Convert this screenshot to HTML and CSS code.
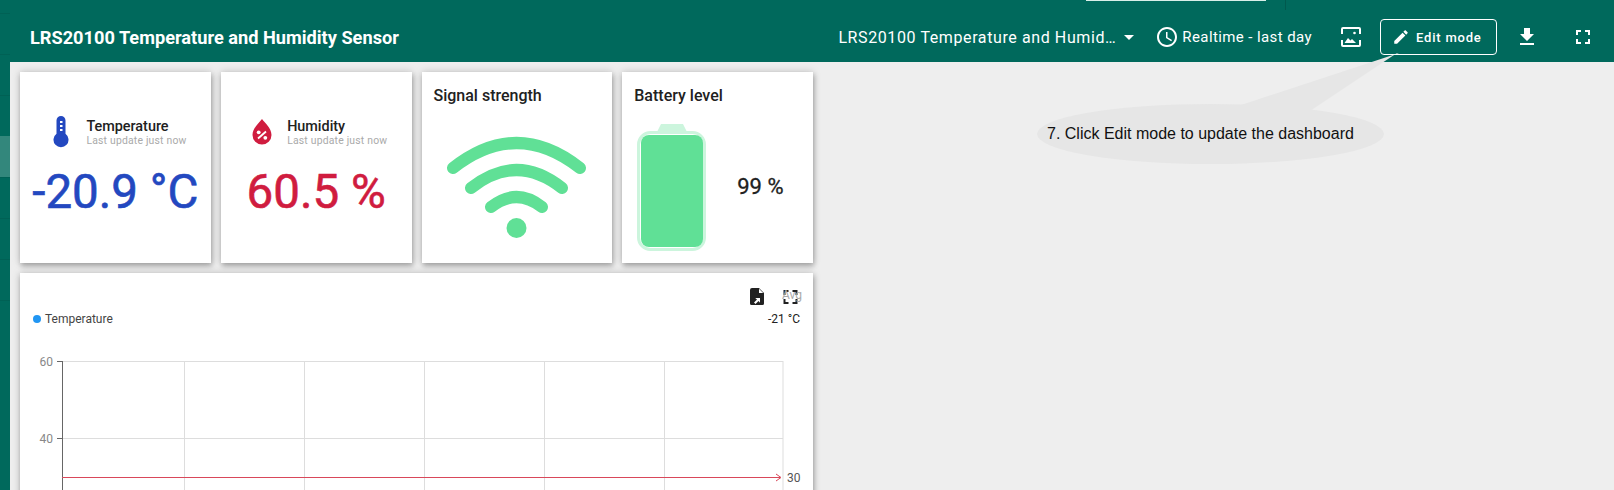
FILE: index.html
```html
<!DOCTYPE html>
<html lang="en">
<head>
    <meta charset="UTF-8">
    <title>LRS20100 Temperature and Humidity Sensor</title>
    <link rel="stylesheet" href="styles.css">
</head>
<body>
    <div class="app">
        <div class="sidebar">
            <div class="nav-item"></div>
            <div class="nav-item"></div>
            <div class="nav-item"></div>
            <div class="nav-item active"></div>
            <div class="nav-item"></div>
            <div class="nav-item"></div>
            <div class="nav-item"></div>
            <div class="nav-item"></div>
        </div>
        <div class="content">
            <div class="header">
                <div class="top-strip"></div>
                <div class="top-line"></div>
                <h1>LRS20100 Temperature and Humidity Sensor</h1>
                <div class="state-select">
                    <span class="state-name">LRS20100 Temperature and Humid…</span>
                    <span class="caret"></span>
                </div>
                <div class="timewindow">
                    <svg class="icon" viewBox="0 0 24 24"><path d="M11.99 2C6.47 2 2 6.48 2 12s4.47 10 9.99 10C17.52 22 22 17.52 22 12S17.52 2 11.99 2zM12 20c-4.42 0-8-3.58-8-8s3.58-8 8-8 8 3.58 8 8-3.58 8-8 8zm.5-13H11v6l5.25 3.15.75-1.23-4.5-2.67z"/></svg>
                    <span>Realtime - last day</span>
                </div>
                <svg class="capture" viewBox="0 0 20 20">
                    <path d="M0 7V2a2 2 0 0 1 2-2h16a2 2 0 0 1 2 2v5h-2V2H2v5zM0 13h2v5h16v-5h2v5a2 2 0 0 1-2 2H2a2 2 0 0 1-2-2z"/>
                    <circle cx="13.500" cy="6" r="1.300"/>
                    <path d="M3.500 16l3.500-5 2.500 2.500 1.500-1.500 4 4z"/>
                </svg>
                <div class="edit-btn">
                    <svg class="icon-small" viewBox="0 0 24 24"><path d="M3 17.250V21h3.750L17.810 9.940l-3.750-3.750L3 17.250zM20.710 7.040c.39-.39.39-1.020 0-1.410l-2.340-2.340c-.39-.39-1.020-.39-1.410 0l-1.830 1.830 3.750 3.750 1.830-1.830z"/></svg>
                    <span>Edit mode</span>
                </div>
                <svg class="icon download" viewBox="0 0 24 24"><path d="M19 9h-4V3H9v6H5l7 7 7-7zM5 18v2h14v-2H5z"/></svg>
                <svg class="icon fullscreen" viewBox="0 0 24 24"><path d="M7 14H5v5h5v-2H7v-3zm-2-4h2V7h3V5H5v5zm12 7h-3v2h5v-5h-2v3zM14 5v2h3v3h2V5h-5z"/></svg>
            </div>

            <div class="main">
                <div class="cards">
                    <div class="card reading">
                        <div class="reading-head">
                            <svg class="reading-icon" viewBox="0 0 20 32">
                                <path fill="#2348c0" d="M5.500 4.500a4.500 4.500 0 0 1 9 0v13.300a7.500 7.500 0 1 1-9 0z"/>
                                <path fill="#fff" d="M9 5h2.500v2H9zM9 9h2.500v2H9zM9 13h2.500v2H9z"/>
                            </svg>
                            <div>
                                <div class="reading-title">Temperature</div>
                                <div class="reading-sub">Last update just now</div>
                            </div>
                        </div>
                        <div class="reading-value temp">-20.9 °C</div>
                    </div>
                    <div class="card reading">
                        <div class="reading-head">
                            <svg class="reading-icon" viewBox="0 0 20 32">
                                <path fill="#d01c3f" d="M10 3c2.500 3.500 9.500 9 9.500 16a9.500 9.500 0 0 1-19 0C.5 12 7.500 6.500 10 3z"/>
                                <path stroke="#fff" stroke-width="1.800" d="M6 22.500L14 15.500"/>
                                <circle fill="#fff" cx="6.700" cy="16.300" r="1.900"/>
                                <circle fill="#fff" cx="13.300" cy="21.800" r="1.900"/>
                            </svg>
                            <div>
                                <div class="reading-title">Humidity</div>
                                <div class="reading-sub">Last update just now</div>
                            </div>
                        </div>
                        <div class="reading-value humid">60.5 %</div>
                    </div>
                    <div class="card gauge">
                        <div class="card-title">Signal strength</div>
                        <svg class="wifi" viewBox="0 0 151 105">
                            <path d="M12 33Q75.500 -17 139 33M30 53Q75.500 17 121 53M50 72Q75.500 52 101 72"/>
                            <circle cx="75.500" cy="93" r="10"/>
                        </svg>
                    </div>
                    <div class="card gauge">
                        <div class="card-title">Battery level</div>
                        <div class="battery-row">
                            <svg class="battery" viewBox="0 0 72 130">
                                <path fill="#ccf5dd" d="M21 9L25 1H47L51 9z"/>
                                <rect x="2.500" y="9.500" width="66" height="117" rx="12" fill="none" stroke="#ccf5dd" stroke-width="3"/>
                                <rect x="5" y="12" width="62" height="112" rx="8" fill="#60e096"/>
                            </svg>
                            <div class="battery-value">99 %</div>
                        </div>
                    </div>
                </div>

                <div class="card chart-card">
                    <div class="chart-tools">
                        <svg class="doc-icon" viewBox="0 0 14 17">
                            <path d="M2 0h7l5 5v10.500a1.500 1.500 0 0 1-1.500 1.500h-11A1.500 1.500 0 0 1 0 15.500V2a2 2 0 0 1 2-2z"/>
                            <path fill="#fff" d="M9 .8V5h4.200zM4 14.500l3-3-1.800-1.500H10v4.800l-1.500-1.800-3 3z"/>
                        </svg>
                        <div class="expand">
                            <svg class="expand-icon" viewBox="5 5 14 14"><path d="M7 14H5v5h5v-2H7v-3zm-2-4h2V7h3V5H5v5zm12 7h-3v2h5v-5h-2v3zM14 5v2h3v3h2V5h-5z"/></svg>
                            <span class="avg">Avg</span>
                        </div>
                    </div>
                    <div class="legend">
                        <span class="legend-dot"></span>
                        <span class="legend-name">Temperature</span>
                        <span class="legend-value">-21 °C</span>
                    </div>
                    <svg class="chart" viewBox="0 0 793 200">
                        <g class="grid">
                            <path d="M42.500 21.500H763M42.500 98.500H763"/>
                            <path d="M164.500 21V200M284.500 21V200M404.500 21V200M524.500 21V200M644.500 21V200M763 21V200"/>
                        </g>
                        <path class="axis" d="M37 21.500H42.500M37 98.500H42.500M42.500 21V200"/>
                        <text class="tick" x="33" y="25.500" text-anchor="end">60</text>
                        <text class="tick" x="33" y="102.500" text-anchor="end">40</text>
                        <path class="limit" d="M42 137.500H760M756 134l5 3.500-5 3.500"/>
                        <text class="tick limit-label" x="767" y="141.500">30</text>
                    </svg>
                </div>
            </div>
        </div>
    </div>

    <div class="callout">
        <svg class="callout-shape" viewBox="0 0 347 115">
            <ellipse cx="173.500" cy="84" rx="173.500" ry="30"/>
            <path d="M198 57L362 3H360L270 63z"/>
        </svg>
        <div class="callout-text">7. Click Edit mode to update the dashboard</div>
    </div>
</body>
</html>
```

FILE: styles.css
```css
html, body {
    height: 100%;
    margin: 0;
    overflow: hidden;
}
body {
    font-family: Roboto, "Liberation Sans", sans-serif;
    background-color: #eeeeee;
    color: #212121;
}
.app {
    display: flex;
    height: 490px;
    overflow: hidden;
}
.sidebar {
    flex: 0 0 10px;
    background-color: #00695c;
    padding-top: 13px;
    box-sizing: border-box;
}
.nav-item {
    height: 41px;
    box-sizing: border-box;
    border-top: 1px solid rgba(0, 0, 0, 0.07);
}
.nav-item.active {
    background-color: rgba(255, 255, 255, 0.2);
    border-top: none;
}
.content {
    flex: 1;
    min-width: 0;
}
.header {
    position: relative;
    display: flex;
    align-items: center;
    height: 62px;
    padding: 12px 0 0 20px;
    box-sizing: border-box;
    background-color: #00695c;
    color: white;
}
.top-strip {
    position: absolute;
    top: 0;
    left: 1076px;
    width: 180px;
    height: 1px;
    background-color: #d8efe9;
}
.top-line {
    position: absolute;
    top: 0;
    left: 1275px;
    width: 1px;
    height: 10px;
    background-color: rgba(0, 0, 0, 0.15);
}
h1 {
    margin: 0 auto 0 0;
    font-size: 18.200px;
    font-weight: 700;
}
.state-select {
    display: flex;
    align-items: center;
    font-size: 16px;
    letter-spacing: 0.6px;
}
.state-name {
    white-space: nowrap;
}
.caret {
    width: 0;
    height: 0;
    margin: 0 0 0 8px;
    border-left: 5px solid transparent;
    border-right: 5px solid transparent;
    border-top: 5px solid white;
}
.timewindow {
    display: flex;
    align-items: center;
    gap: 3px;
    margin-left: 21px;
    font-size: 15px;
    letter-spacing: 0.4px;
}
.icon {
    width: 24px;
    height: 24px;
    fill: white;
}
.capture {
    width: 20px;
    height: 20px;
    margin-left: 29px;
    fill: white;
}
.edit-btn {
    display: flex;
    align-items: center;
    gap: 6px;
    width: 117px;
    height: 36px;
    margin-left: 19px;
    padding-left: 11px;
    box-sizing: border-box;
    border: 1px solid white;
    border-radius: 4px;
    font-size: 13px;
    font-weight: 500;
    letter-spacing: 0.8px;
}
.icon-small {
    width: 18px;
    height: 18px;
    fill: white;
}
.download {
    margin-left: 18px;
}
.fullscreen {
    margin-left: 32px;
    margin-right: 19px;
}
.main {
    padding: 10px;
}
.cards {
    display: grid;
    grid-template-columns: repeat(4, 190.750px);
    column-gap: 10px;
    height: 191px;
}
.card {
    background-color: white;
    box-shadow: 0 0 8px rgba(0, 0, 0, 0.18), 1px 3px 5px rgba(0, 0, 0, 0.25);
}
.reading {
    display: flex;
    flex-direction: column;
    align-items: center;
    padding-top: 44px;
    box-sizing: border-box;
}
.reading-head {
    display: flex;
    align-items: center;
    gap: 15px;
    width: 150px;
    padding-left: 11px;
    box-sizing: border-box;
}
.reading-icon {
    flex: 0 0 20px;
    height: 32px;
}
.reading-title {
    font-size: 14.400px;
    font-weight: 500;
    line-height: 17px;
}
.reading-sub {
    font-size: 10.400px;
    line-height: 11px;
    color: #aaaaaa;
    white-space: nowrap;
    letter-spacing: 0.2px;
}
.reading-value {
    margin-top: 17px;
    font-size: 47.500px;
    -webkit-text-stroke: 0.6px currentColor;
    line-height: 55px;
    white-space: nowrap;
}
.temp {
    color: #2348c0;
}
.humid {
    color: #d01c3f;
}
.gauge {
    padding: 14px 12px 0;
    box-sizing: border-box;
}
.card-title {
    font-size: 16px;
    font-weight: 500;
    line-height: 19px;
}
.wifi {
    display: block;
    width: 151px;
    height: 105px;
    margin: 30px 0 0 7px;
    fill: #60e096;
}
.wifi path {
    fill: none;
    stroke: #60e096;
    stroke-width: 12;
    stroke-linecap: round;
}
.battery-row {
    display: flex;
    align-items: center;
    margin-top: 18px;
}
.battery {
    width: 72px;
    height: 130px;
    margin-left: 2px;
}
.battery-value {
    margin: 0 0 3px 29px;
    font-size: 22px;
    -webkit-text-stroke: 0.3px currentColor;
    white-space: nowrap;
}
.chart-card {
    width: 793px;
    height: 300px;
    margin-top: 10px;
}
.chart-tools {
    display: flex;
    justify-content: flex-end;
    align-items: center;
    gap: 19px;
    height: 17px;
    padding: 15px 15px 0 0;
}
.doc-icon {
    width: 14px;
    height: 17px;
    fill: #212121;
}
.expand {
    position: relative;
    width: 15px;
    height: 14px;
}
.expand-icon {
    display: block;
    width: 15px;
    height: 14px;
    fill: #212121;
}
.avg {
    position: absolute;
    top: -2px;
    left: -1px;
    font-size: 12px;
    color: #aaaaaa;
}
.legend {
    display: flex;
    align-items: center;
    height: 16px;
    margin-top: 6px;
    padding: 0 13px 0 13px;
    font-size: 12px;
}
.legend-dot {
    width: 8px;
    height: 8px;
    margin-right: 4px;
    border-radius: 50%;
    background-color: #2196f3;
}
.legend-name {
    color: #444444;
    margin-right: auto;
}
.chart {
    display: block;
    width: 793px;
    height: 200px;
    margin-top: 13px;
}
.grid path {
    fill: none;
    stroke: #dddddd;
}
.axis {
    fill: none;
    stroke: #666666;
}
.tick {
    font-size: 12px;
    fill: #888888;
}
.limit {
    fill: none;
    stroke: #d9485a;
}
.limit-label {
    fill: #555555;
}
.callout {
    position: absolute;
    top: 50px;
    left: 1037px;
    width: 347px;
    height: 115px;
}
.callout-shape {
    display: block;
    width: 347px;
    height: 115px;
    overflow: visible;
    fill: #e6e6e6;
}
.callout-text {
    position: absolute;
    top: 75px;
    left: 10px;
    font-family: "Liberation Sans", Arial, sans-serif;
    font-size: 16px;
    line-height: 18px;
    color: #111111;
    white-space: nowrap;
}
```
